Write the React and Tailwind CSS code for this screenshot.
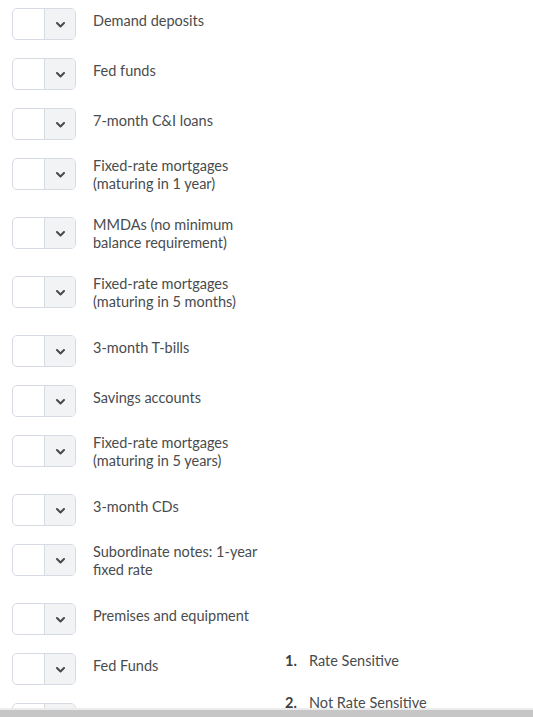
const rows = [
  { label: ["Demand deposits"] },
  { label: ["Fed funds"] },
  { label: ["7-month C&I loans"] },
  { label: ["Fixed-rate mortgages", "(maturing in 1 year)"] },
  { label: ["MMDAs (no minimum", "balance requirement)"] },
  { label: ["Fixed-rate mortgages", "(maturing in 5 months)"] },
  { label: ["3-month T-bills"] },
  { label: ["Savings accounts"] },
  { label: ["Fixed-rate mortgages", "(maturing in 5 years)"] },
  { label: ["3-month CDs"] },
  { label: ["Subordinate notes: 1-year", "fixed rate"] },
  { label: ["Premises and equipment"] },
  { label: ["Fed Funds"], choices: true },
  { label: [] },
];

const choices = ["Rate Sensitive", "Not Rate Sensitive"];

function Chevron() {
  return (
    <svg width="9" height="6" viewBox="0 0 9 6" className="block">
      <polyline points="1,1 4.5,4.5 8,1" fill="none" stroke="#494949" strokeWidth="2" strokeLinecap="round" strokeLinejoin="round" />
    </svg>
  );
}

function SelectBox() {
  return (
    <div className="flex h-[32px] w-[64px] shrink-0 overflow-hidden rounded-[5px] border border-[#d6dbe3] bg-white">
      <div className="w-[32px] border-r border-[#d6dbe3]" />
      <div className="flex flex-1 items-center justify-center bg-[#f2f3f5] pt-[1px]">
        <Chevron />
      </div>
    </div>
  );
}

export default function App() {
  return (
    <div className="relative min-h-[717px] bg-white text-[14.5px] text-[#494c4e]" style={{ fontFamily: "Lato, 'Noto Sans', sans-serif" }}>
      <div className="flex flex-col pl-[12px] pt-[8px]">
        {rows.map((row, i) => (
          <div key={i} className={"flex items-start " + (row.label.length > 1 ? "h-[59px]" : "h-[50px]")}>
            <SelectBox />
            <div className={"ml-[17px] w-[192px] leading-[17.5px] " + (row.label.length > 1 ? "-mt-[1px]" : "pt-[4px]")}>
              {row.label.map((l, j) => (
                <div key={j}>{l}</div>
              ))}
            </div>
            {row.choices && (
              <ol className="-mt-[1px] flex flex-col gap-[24px] leading-[18px]">
                {choices.map((c, k) => (
                  <li key={k} className="flex">
                    <span className="w-[24px] font-bold text-[#3d4043]">{k + 1}.</span>
                    <span>{c}</span>
                  </li>
                ))}
              </ol>
            )}
          </div>
        ))}
      </div>
      <div className="fixed bottom-0 left-0 right-0 h-[9px] border-t-[2px] border-[#ececec] bg-[#c6c6c6]" />
    </div>
  );
}
